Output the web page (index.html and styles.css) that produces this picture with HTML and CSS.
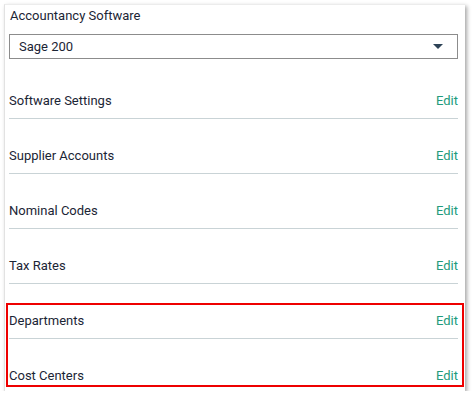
FILE: index.html
```html
<!DOCTYPE html>
<html lang="en">
<head>
  <meta charset="UTF-8" />
  <meta name="viewport" content="width=device-width, initial-scale=1.0" />
  <title>Accountancy Software</title>
  <link rel="stylesheet" href="styles.css">
</head>
<body>
  <div class="card">
    <div class="title">Accountancy Software</div>
    <div class="select">
      <span>Sage 200</span>
      <span class="arrow"></span>
    </div>

    <div class="row first"><span class="label">Software Settings</span><a href="#" class="edit">Edit</a></div>
    <div class="row"><span class="label">Supplier Accounts</span><a href="#" class="edit">Edit</a></div>
    <div class="row"><span class="label">Nominal Codes</span><a href="#" class="edit">Edit</a></div>
    <div class="row"><span class="label">Tax Rates</span><a href="#" class="edit">Edit</a></div>
    <div class="row"><span class="label">Departments</span><a href="#" class="edit">Edit</a></div>
    <div class="row last"><span class="label">Cost Centers</span><a href="#" class="edit">Edit</a></div>

    <div class="highlight"></div>
  </div>
</body>
</html>
```

FILE: styles.css
```css
* {
  margin: 0;
  padding: 0;
  box-sizing: border-box;
}

body {
  font-family: Roboto, 'Liberation Sans', sans-serif;
  background: #fff;
  color: #1b2535;
}

.card {
  position: relative;
  margin: 4px 0 0 4px;
  width: 461px;
  height: 387px;
  padding: 0 7px 0 4px;
  background: #fff;
  border-left: 1px solid #e2e2e2;
  border-top: 1px solid #ececec;
  box-shadow: 2px 2px 4px rgba(0, 0, 0, 0.35);
}

.title {
  font-size: 13px;
  line-height: 16px;
  padding: 3px 0 0 1px;
}

.select {
  display: flex;
  justify-content: space-between;
  align-items: center;
  height: 25px;
  margin-top: 10px;
  padding: 0 14px 0 9px;
  border: 1px solid #8c8c8c;
  font-size: 13px;
}

.arrow {
  width: 0;
  height: 0;
  border-left: 5px solid transparent;
  border-right: 5px solid transparent;
  border-top: 5px solid #2d4356;
}

.row {
  display: flex;
  justify-content: space-between;
  align-items: flex-end;
  height: 55px;
  padding-bottom: 9px;
  border-bottom: 1px solid #c9d3d6;
  font-size: 13px;
  line-height: 16px;
}

.row.first {
  margin-top: 5px;
}

.row.last {
  height: 54px;
  border-bottom: none;
}

.edit {
  color: #229b7c;
  text-decoration: none;
}

.highlight {
  position: absolute;
  left: 1px;
  top: 298px;
  width: 458px;
  height: 84px;
  border: 2px solid #ee0000;
}
```
